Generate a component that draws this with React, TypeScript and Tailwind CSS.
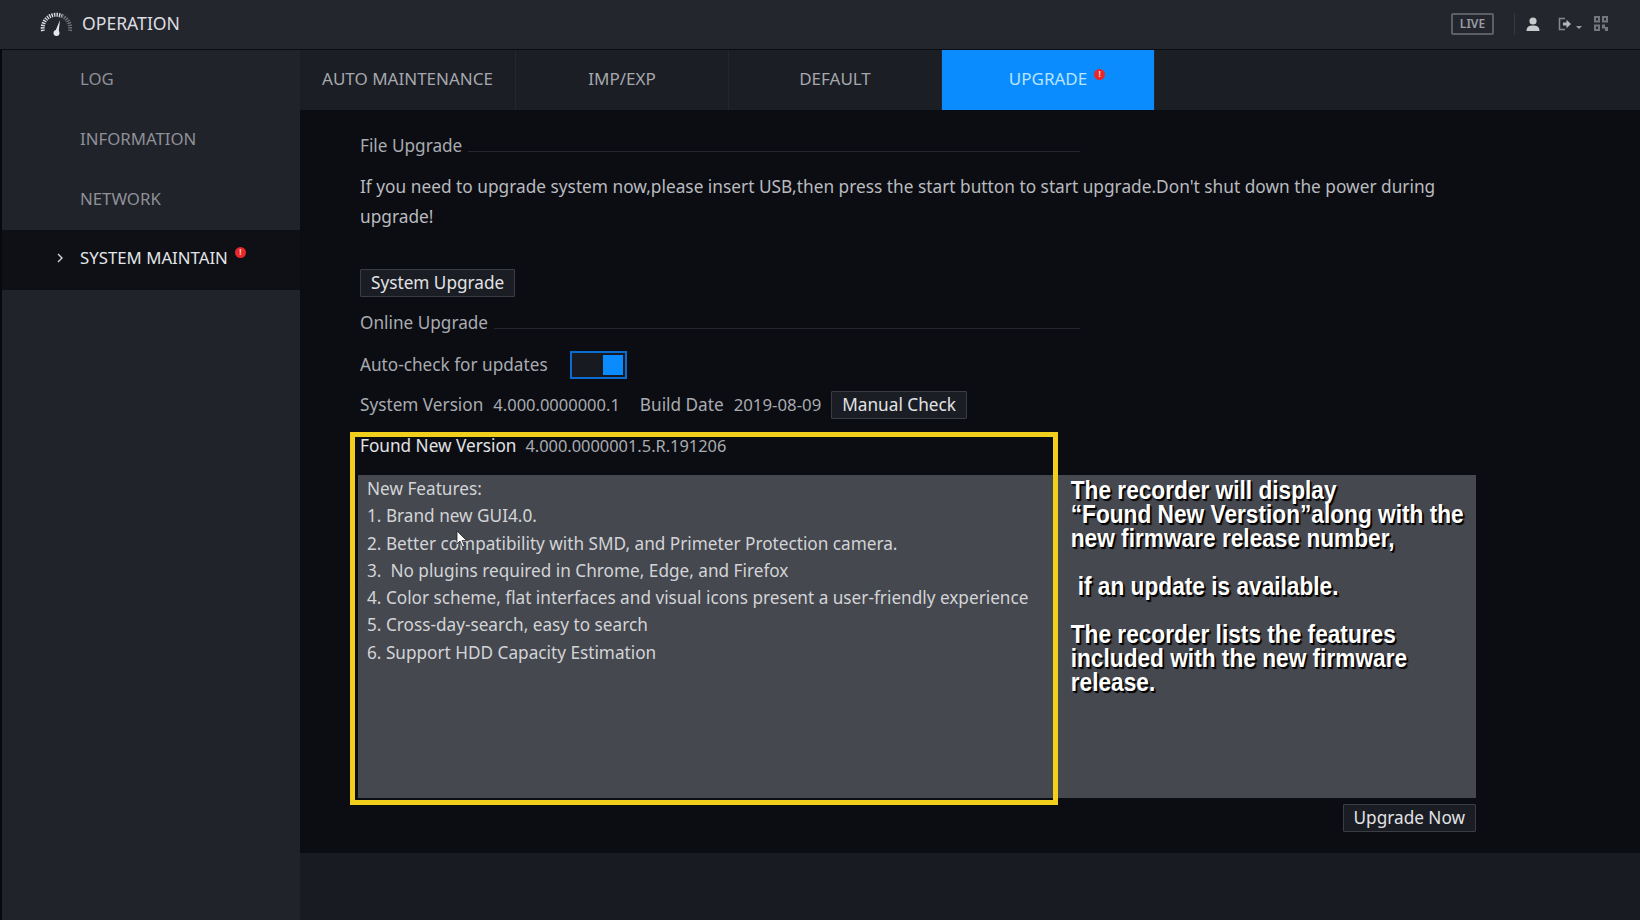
import React from 'react';

const menu = ['LOG', 'INFORMATION', 'NETWORK'];
const tabs = ['AUTO MAINTENANCE', 'IMP/EXP', 'DEFAULT'];
const features = [
  '1. Brand new GUI4.0.',
  '2. Better compatibility with SMD, and Primeter Protection camera.',
  '3.  No plugins required in Chrome, Edge, and Firefox',
  '4. Color scheme, flat interfaces and visual icons present a user-friendly experience',
  '5. Cross-day-search, easy to search',
  '6. Support HDD Capacity Estimation',
];

const Dot = () => (
  <span className="flex h-[11px] w-[11px] items-center justify-center rounded-full bg-[#e8272b] text-[8px] leading-none font-bold text-[#ffd9c9]">!</span>
);

const Gauge = () => (
  <svg width="32" height="26" viewBox="0 0 32 26" fill="none">
    <path d="M3 20 A13.5 13.5 0 0 1 22 5" stroke="#d8d9dc" strokeWidth="4" strokeDasharray="1.4 1" />
    <path d="M22 5 A13.5 13.5 0 0 1 30 20" stroke="#6d7077" strokeWidth="4" strokeDasharray="1.4 1" />
    <path d="M15 21 L20 9 L18.5 22 Z" fill="#e6e7e9" />
    <circle cx="16.5" cy="22" r="3" fill="#e6e7e9" />
  </svg>
);

const Section = ({ title }: { title: string }) => (
  <div className="flex h-7 w-[720px] items-center gap-[6px]">
    <span className="text-[#a9abb0]">{title}</span>
    <div className="mt-[10px] h-px flex-1 bg-[#24272e]" />
  </div>
);

const Btn = ({ label }: { label: string }) => (
  <button className="h-7 rounded-[1px] border border-[#3a3d44] bg-[#1a1d24] px-[10px] pb-[1px] leading-none text-[#e2e3e5]">{label}</button>
);

export default function App() {
  return (
    <div className="flex h-[920px] w-[1640px] flex-col overflow-hidden bg-[#181b22] font-['Noto_Sans',sans-serif] text-[17.2px]">
      {/* top bar */}
      <header className="flex h-[50px] items-center justify-between border-b border-[#0b0c11] bg-[#24262e] pr-[32px] pl-[40px]">
        <div className="flex items-center gap-[10px]">
          <Gauge />
          <span className="pb-[2px] text-[17.6px] text-[#dcdde0]">OPERATION</span>
        </div>
        <div className="mb-[2px] flex items-center">
          <span className="flex h-[22px] w-[43px] items-center justify-center rounded-[2px] border-2 border-[#5c5f67] text-[12px] font-semibold text-[#9b9da3]">LIVE</span>
          <div className="mr-[11px] ml-[20px] h-[22px] w-px bg-[#363941]" />
          <svg width="14" height="14" viewBox="0 0 14 14" fill="#c9cace">
            <circle cx="7" cy="4" r="3.6" />
            <path d="M0.5 14 C0.5 9.5 3.5 8.5 7 8.5 S13.5 9.5 13.5 14 Z" />
          </svg>
          <svg className="ml-[18px]" width="24" height="14" viewBox="0 0 24 14" fill="none">
            <path d="M7 1.5 H1.5 V12.5 H7" stroke="#85888e" strokeWidth="1.5" />
            <path d="M5 5.5 H8.5 V2.8 L13 7 L8.5 11.2 V8.5 H5 Z" fill="#b4b6ba" />
            <path d="M18 9 H24 L21 12 Z" fill="#9a9ca2" />
          </svg>
          <svg className="ml-[12px]" width="14" height="15" viewBox="0 0 14 15" fill="#74777e">
            <path fillRule="evenodd" d="M0 0 H6 V6.5 H0 Z M2 2 V4.5 H4 V2 Z M8 0 H14 V6.5 H8 Z M10 2 V4.5 H12 V2 Z M0 8.5 H6 V15 H0 Z M2 10.5 V13 H4 V10.5 Z" />
            <path d="M8 8.5 H11 V11 H14 V15 H11 V12.5 H8 Z" />
          </svg>
        </div>
      </header>

      <div className="flex flex-1">
        {/* sidebar */}
        <aside className="w-[300px] border-l-2 border-[#08090d] bg-[#21232b] text-[16.8px]">
          {menu.map((m) => (
            <div key={m} className="flex h-[60px] items-center pb-[3px] pl-[78px] text-[#8f9197]">{m}</div>
          ))}
          <div className="flex h-[60px] items-center bg-[#0e1016] pb-[4px] pl-[54px] text-[#e4e5e7]">
            <svg width="8" height="10" viewBox="0 0 8 10" fill="none">
              <path d="M2 1 L6 5 L2 9" stroke="#d5d6d9" strokeWidth="1.4" />
            </svg>
            <span className="ml-[16px]">SYSTEM MAINTAIN</span>
            <span className="mb-[12px] ml-[7px]"><Dot /></span>
          </div>
        </aside>

        <main className="flex flex-1 flex-col">
          {/* tabs */}
          <nav className="flex h-[60px] gap-px bg-[#24262e] text-[17px]">
            {tabs.map((t) => (
              <div key={t} className="flex w-[212px] items-center justify-center bg-[#1b1e25] pb-[3px] text-[#a6a8ad] first:w-[215px]">{t}</div>
            ))}
            <div className="flex w-[212px] items-center justify-center bg-[#0a8cff] pb-[3px] text-[#b9e4ff]">
              <span className="relative">
                UPGRADE
                <span className="absolute top-[3px] left-full ml-[7px]"><Dot /></span>
              </span>
            </div>
            <div className="flex-1 bg-[#1b1e25]" />
          </nav>

          {/* content */}
          <section className="flex h-[743px] flex-col bg-[#0b0d13] pt-[22px] pl-[60px] text-[#b4b6ba]">
            <Section title="File Upgrade" />
            <p className="mt-[12px] w-[1090px] text-[17.3px] leading-[30px] text-[#b9bbbf]">
              If you need to upgrade system now,please insert USB,then press the start button to start upgrade.Don't shut down the power during upgrade!
            </p>
            <div className="mt-[37px]"><Btn label="System Upgrade" /></div>
            <div className="mt-[12px]"><Section title="Online Upgrade" /></div>
            <div className="mt-[14px] flex h-7 items-center gap-[22px]">
              <span className="text-[#a9abb0]">Auto-check for updates</span>
              <span className="flex h-7 w-[57px] justify-end border-2 border-[#0a6cd0] bg-[#171a21] p-[2px]">
                <span className="w-[20px] bg-[#0a8cff]" />
              </span>
            </div>
            <div className="mt-[12px] flex h-7 items-center text-[#a9abb0]">
              <span>System Version</span>
              <span className="ml-[10px] text-[16.5px]">4.000.0000000.1</span>
              <span className="ml-[20px]">Build Date</span>
              <span className="ml-[10px] text-[16.8px]">2019-08-09</span>
              <span className="ml-[10px]"><Btn label="Manual Check" /></span>
            </div>
            <div className="mt-[13px] flex h-7 items-center">
              <span className="text-[#e2e3e5]">Found New Version</span>
              <span className="ml-[9px] text-[16.4px] text-[#a9abb0]">4.000.0000001.5.R.191206</span>
            </div>

            {/* release notes + callout */}
            <div className="relative mt-[15px] -ml-[2px] flex h-[323px] w-[1118px] bg-[#45484f]">
              <div className="w-[704px] shrink-0 pl-[9px] leading-[27.3px] text-[#d3d4d7]">
                <div>New Features:</div>
                {features.map((f) => (
                  <div key={f} className="whitespace-pre">{f}</div>
                ))}
              </div>
              <div className="origin-left scale-x-[0.872] pt-[3px] pl-[10px] font-['Liberation_Sans',sans-serif] text-[26px] leading-[24px] font-bold whitespace-pre text-white [text-shadow:2px_2px_1px_#000,1px_1px_0_#000]">
                <div>The recorder will display</div>
                <div>“Found New Verstion”along with the</div>
                <div>new firmware release number,</div>
                <div className="mt-[24px] pl-[8px]">if an update is available.</div>
                <div className="mt-[24px]">The recorder lists the features</div>
                <div>included with the new firmware</div>
                <div>release.</div>
              </div>
              {/* yellow annotation frame */}
              <div className="absolute top-[-43px] left-[-8px] h-[373px] w-[708px] border-[5px] border-[#f2cf1d]" />
              {/* mouse pointer */}
              <svg className="absolute top-[55px] left-[98px]" width="12" height="18" viewBox="0 0 12 18">
                <path d="M1 1 V14 L4 11 L6.5 17 L8.5 16 L6 10.5 H10.5 Z" fill="#fff" stroke="#222" strokeWidth="0.8" />
              </svg>
            </div>
            <div className="mt-[6px] -ml-[2px] flex w-[1118px] justify-end"><Btn label="Upgrade Now" /></div>
          </section>
          <div className="flex-1 bg-[#181b22]" />
        </main>
      </div>
    </div>
  );
}
